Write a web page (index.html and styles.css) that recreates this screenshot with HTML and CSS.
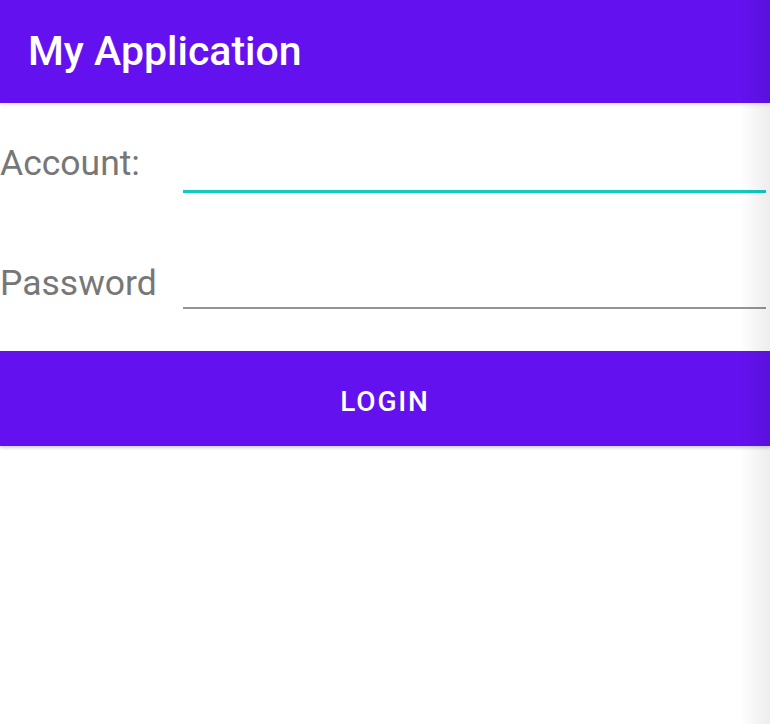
FILE: index.html
```html
<!DOCTYPE html>
<html lang="en">
<head>
<meta charset="utf-8">
<title>My Application</title>
<link rel="stylesheet" href="styles.css">
</head>
<body>
<header class="appbar">
  <h1 class="title">My Application</h1>
</header>
<main class="form">
  <div class="row row-account">
    <label class="label">Account:</label>
    <div class="field focused"></div>
  </div>
  <div class="row row-password">
    <label class="label">Password</label>
    <div class="field idle"></div>
  </div>
  <button class="login">LOGIN</button>
</main>
<div class="edge-shade"></div>
</body>
</html>
```
FILE: styles.css
```css
* { box-sizing: border-box; }
html, body { margin: 0; padding: 0; background: #ffffff; }
body {
  width: 770px;
  height: 724px;
  overflow: hidden;
  font-family: Roboto, "Liberation Sans", sans-serif;
}
.appbar {
  height: 103px;
  background: #6312ef;
  padding: 31px 0 0 28px;
  box-shadow: 0 2px 4px rgba(0,0,0,0.12);
  position: relative;
  z-index: 1;
}
.title {
  margin: 0;
  font-size: 41px;
  line-height: 40px;
  font-weight: 500;
  color: #ffffff;
}
.form {
  display: flex;
  flex-direction: column;
  padding-top: 40px;
}
.row {
  display: flex;
  align-items: flex-start;
  padding-right: 4px;
}
.row-password { margin-top: 70px; }
.label {
  width: 183px;
  flex: 0 0 183px;
  font-size: 35.5px;
  line-height: 40px;
  color: #777777;
}
.field { flex: 1; }
.field.focused {
  height: 50px;
  border-bottom: 3px solid #12c9c6;
}
.field.idle {
  height: 46px;
  border-bottom: 2px solid #959595;
}
.login {
  margin-top: 42px;
  height: 95px;
  width: 100%;
  border: none;
  background: #6312ef;
  color: #ffffff;
  font-family: Roboto, "Liberation Sans", sans-serif;
  font-size: 28px;
  line-height: 28px;
  font-weight: 500;
  letter-spacing: 1.8px;
  padding: 6px 0 0 0;
  box-shadow: 0 2px 3px rgba(0,0,0,0.18);
  display: flex;
  align-items: center;
  justify-content: center;
}
.edge-shade {
  position: fixed;
  top: 0;
  right: 0;
  width: 30px;
  height: 100%;
  pointer-events: none;
  background: linear-gradient(to right, rgba(0,0,0,0), rgba(0,0,0,0.07));
  z-index: 5;
}
```
